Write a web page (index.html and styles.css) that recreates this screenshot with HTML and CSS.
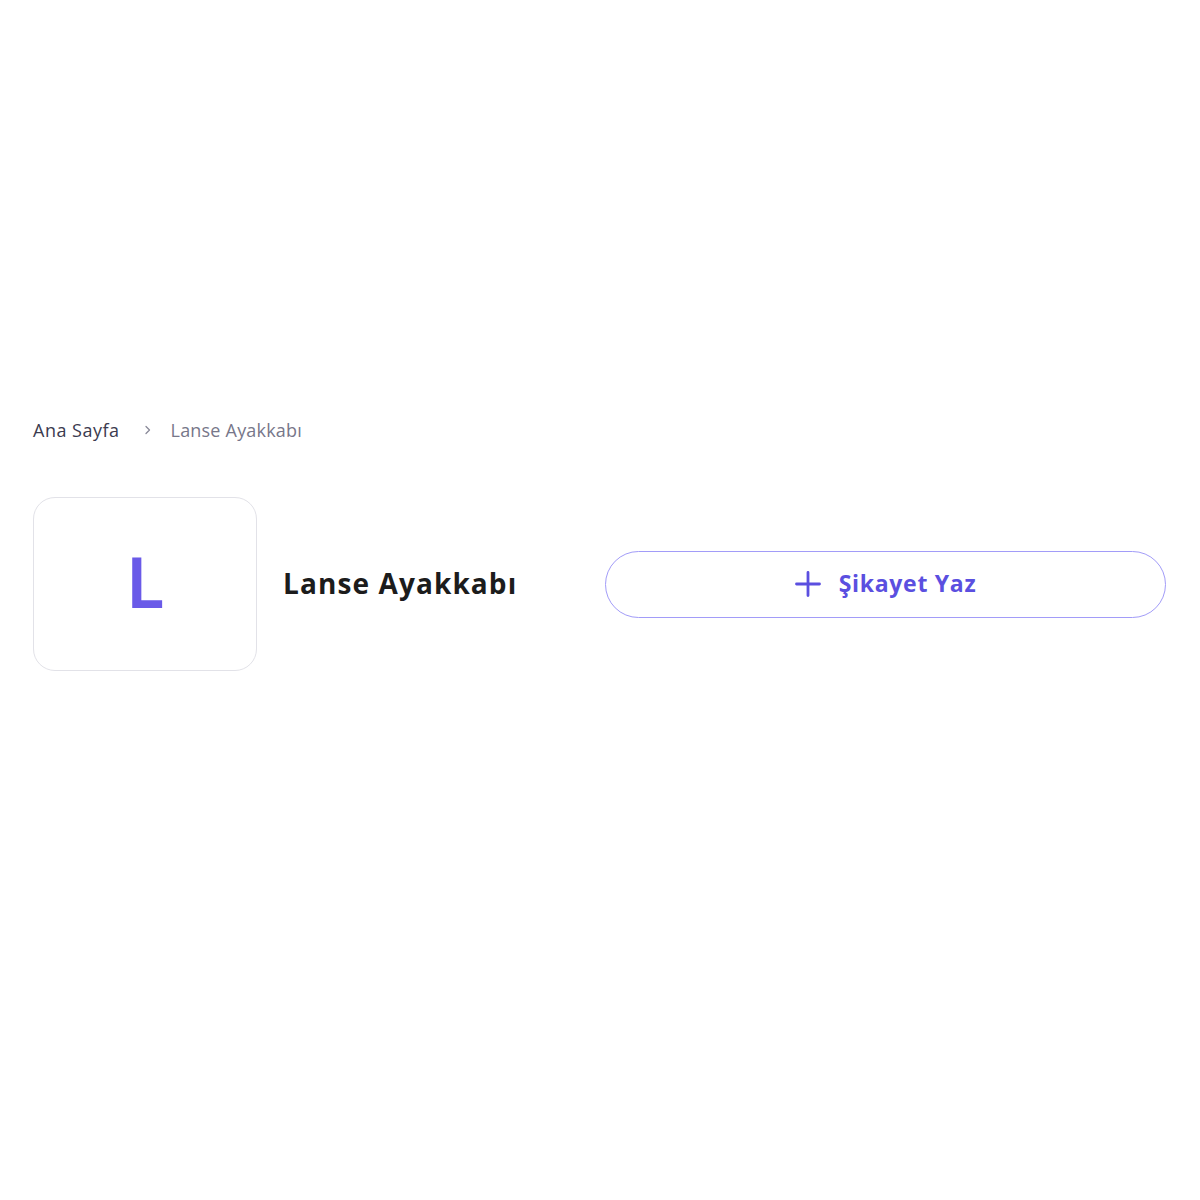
FILE: index.html
```html
<!DOCTYPE html>
<html lang="tr">
<head>
  <meta charset="UTF-8">
  <meta name="viewport" content="width=device-width, initial-scale=1.0">
  <title>Lanse Ayakkabı</title>
  <link rel="stylesheet" href="styles.css">
</head>
<body>

<div class="page">
  <!-- breadcrumb -->
  <nav class="breadcrumb">
    <a href="#" class="crumb">Ana Sayfa</a>
    <svg class="crumb-sep" width="10" height="10" viewBox="0 0 10 10">
      <path d="M3 1.5 L6.5 5 L3 8.5" fill="none" stroke="#8a8a99" stroke-width="1.3" stroke-linecap="round" stroke-linejoin="round"/>
    </svg>
    <span class="crumb current">Lanse Ayakkabı</span>
  </nav>

  <!-- brand header -->
  <div class="brand-header">
    <div class="brand-info">
      <div class="brand-logo">L</div>
      <h1 class="brand-name">Lanse Ayakkabı</h1>
    </div>
    <a href="#" class="complaint-btn">
      <svg width="26" height="26" viewBox="0 0 26 26">
        <path d="M13 1.5 V24.5 M1.5 13 H24.5" stroke="#5b4fe0" stroke-width="2.8" stroke-linecap="round"/>
      </svg>
      <span>Şikayet Yaz</span>
    </a>
  </div>
</div>

</body>
</html>
```

FILE: styles.css
```css
body {
  font-family: "Open Sans", "Noto Sans", Arial, sans-serif;
  background-color: #fff;
  margin: 0;
  padding: 0;
}
.page {
  padding: 416px 34px 0 33px;
}
.breadcrumb {
  display: flex;
  align-items: center;
  height: 28px;
  font-size: 18px;
  letter-spacing: 0.5px;
}
.crumb {
  color: #3b3b4f;
  text-decoration: none;
}
.crumb.current {
  color: #77778a;
  letter-spacing: 0.2px;
}
.crumb-sep {
  margin: 0 18px 0 23px;
}
.brand-header {
  display: grid;
  grid-template-columns: 1fr 561px;
  align-items: center;
  margin-top: 53px;
}
.brand-info {
  display: flex;
  align-items: center;
  gap: 26px;
}
.brand-logo {
  width: 222px;
  height: 166px;
  padding-bottom: 6px;
  border: 1px solid #e2e2e8;
  border-radius: 22px;
  display: flex;
  align-items: center;
  justify-content: center;
  color: #6a5ae8;
  font-family: "Noto Sans", sans-serif;
  font-size: 70px;
  font-weight: 600;
}
.brand-name {
  margin: 0 0 3px;
  font-size: 28px;
  font-weight: 700;
  letter-spacing: 1.1px;
  color: #1c1c1c;
}
.complaint-btn {
  height: 65px;
  border: 1px solid #a29cf8;
  border-radius: 40px;
  display: flex;
  align-items: center;
  justify-content: center;
  gap: 18px;
  color: #5b4fe0;
  text-decoration: none;
  font-size: 23px;
  font-weight: 700;
  letter-spacing: 0.7px;
}
.complaint-btn span {
  margin-bottom: 2px;
}
```
